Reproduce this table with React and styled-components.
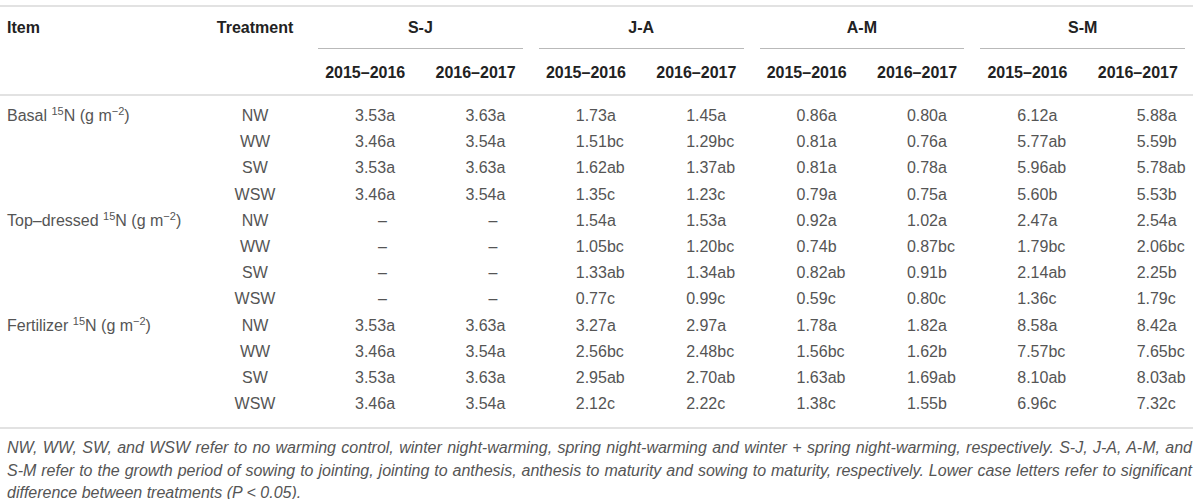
import React from "react";
import styled, { createGlobalStyle } from "styled-components";

const Global = createGlobalStyle`
  html, body { margin: 0; padding: 0; background: #fff; }
  body { font-family: "Liberation Sans", Arial, Helvetica, sans-serif; }
`;

const Page = styled.div`
  width: 1200px;
  padding-top: 5px;
`;

const Table = styled.table`
  width: 1193px;
  table-layout: fixed;
  border-collapse: separate;
  border-spacing: 0;
  font-size: 16px;
`;

const Head = styled.thead``;

const HeadCell = styled.th`
  height: 42px;
  padding: ${(p) => (p.$row === 2 ? "3px 0 0 0" : "0")};
  font-weight: bold;
  color: #222;
  text-align: ${(p) => (p.$left ? "left" : "center")};
  padding-left: ${(p) => (p.$left ? "7px" : "0")};
  vertical-align: middle;
  border-top: ${(p) => (p.$row === 1 ? "2px solid #e2e2e2" : "none")};
  border-bottom: ${(p) => (p.$row === 2 ? "2px solid #e2e2e2" : "none")};
  white-space: nowrap;
`;

const GroupCell = styled.th`
  height: 42px;
  padding: 0 8px;
  border-top: 2px solid #e2e2e2;
  vertical-align: bottom;
`;

const GroupLabel = styled.div`
  height: 41px;
  display: flex;
  align-items: center;
  justify-content: center;
  border-bottom: 1px solid #b9b9b9;
  font-weight: bold;
  color: #222;
`;

const Row = styled.tr`
  &:first-child td { padding-top: 7px; }
  &:last-child td { padding-bottom: 10px; border-bottom: 2px solid #e2e2e2; }
`;

const Cell = styled.td`
  height: 26.2px;
  line-height: 26.2px;
  padding: 0;
  color: #555;
  white-space: nowrap;
  vertical-align: middle;
`;

const ItemCell = styled(Cell)`
  padding-left: 7px;
  text-align: left;
`;

const TreatCell = styled(Cell)`
  text-align: center;
`;

const ValueCell = styled(Cell)`
  text-align: left;
  padding-left: ${(p) => p.$pad}px;
`;

const Sup = styled.sup`
  font-size: 11px;
  line-height: 0;
  vertical-align: 6px;
`;

const Note = styled.p`
  margin: 8px 0 0 0;
  padding: 0 8px 0 7px;
  font-style: italic;
  font-size: 16px;
  line-height: 22.5px;
  color: #555;
  text-align: justify;
  text-align-last: left;
`;

const groups = ["S-J", "J-A", "A-M", "S-M"];
const years = ["2015\u20132016", "2016\u20132017"];

const Label = ({ name }) => (
  <>
    {name} <Sup>15</Sup>N (g m<Sup>{"\u2212"}2</Sup>)
  </>
);

const D = "\u2013";

const rows = [
  { item: "Basal", t: "NW", v: ["3.53a", "3.63a", "1.73a", "1.45a", "0.86a", "0.80a", "6.12a", "5.88a"] },
  { t: "WW", v: ["3.46a", "3.54a", "1.51bc", "1.29bc", "0.81a", "0.76a", "5.77ab", "5.59b"] },
  { t: "SW", v: ["3.53a", "3.63a", "1.62ab", "1.37ab", "0.81a", "0.78a", "5.96ab", "5.78ab"] },
  { t: "WSW", v: ["3.46a", "3.54a", "1.35c", "1.23c", "0.79a", "0.75a", "5.60b", "5.53b"] },
  { item: "Top\u2013dressed", t: "NW", v: [D, D, "1.54a", "1.53a", "0.92a", "1.02a", "2.47a", "2.54a"] },
  { t: "WW", v: [D, D, "1.05bc", "1.20bc", "0.74b", "0.87bc", "1.79bc", "2.06bc"] },
  { t: "SW", v: [D, D, "1.33ab", "1.34ab", "0.82ab", "0.91b", "2.14ab", "2.25b"] },
  { t: "WSW", v: [D, D, "0.77c", "0.99c", "0.59c", "0.80c", "1.36c", "1.79c"] },
  { item: "Fertilizer", t: "NW", v: ["3.53a", "3.63a", "3.27a", "2.97a", "1.78a", "1.82a", "8.58a", "8.42a"] },
  { t: "WW", v: ["3.46a", "3.54a", "2.56bc", "2.48bc", "1.56bc", "1.62b", "7.57bc", "7.65bc"] },
  { t: "SW", v: ["3.53a", "3.63a", "2.95ab", "2.70ab", "1.63ab", "1.69ab", "8.10ab", "8.03ab"] },
  { t: "WSW", v: ["3.46a", "3.54a", "2.12c", "2.22c", "1.38c", "1.55b", "6.96c", "7.32c"] },
];

const padFor = (i, val) => {
  const base = i === 7 ? 54 : 45;
  return val === D ? base + 23 : base;
};

const WJ = "\u2060";
const note =
  "NW, WW, SW, and WSW refer to no warming control, winter night-warming, spring night-warming " +
  `and winter + spring night-warming, respectively. S-${WJ}J, J-${WJ}A, A-${WJ}M, and S-${WJ}M refer to the ` +
  "growth period of sowing to jointing, jointing to anthesis, anthesis to maturity and sowing " +
  "to maturity, respectively. Lower case letters refer to significant difference between " +
  "treatments (P < 0.05).";

export default function App() {
  return (
    <Page>
      <Global />
      <Table>
        <colgroup>
          <col style={{ width: 200 }} />
          <col style={{ width: 110 }} />
          {Array.from({ length: 8 }).map((_, i) => (
            <col key={i} style={{ width: 110.375 }} />
          ))}
        </colgroup>
        <Head>
          <tr>
            <HeadCell $row={1} $left>Item</HeadCell>
            <HeadCell $row={1}>Treatment</HeadCell>
            {groups.map((g) => (
              <GroupCell key={g} colSpan={2}>
                <GroupLabel>{g}</GroupLabel>
              </GroupCell>
            ))}
          </tr>
          <tr>
            <HeadCell $row={2} />
            <HeadCell $row={2} />
            {groups.map((g) =>
              years.map((y) => (
                <HeadCell $row={2} key={g + y}>
                  {y}
                </HeadCell>
              ))
            )}
          </tr>
        </Head>
        <tbody>
          {rows.map((r, ri) => (
            <Row key={ri}>
              <ItemCell>{r.item ? <Label name={r.item} /> : null}</ItemCell>
              <TreatCell>{r.t}</TreatCell>
              {r.v.map((val, i) => (
                <ValueCell key={i} $pad={padFor(i, val)}>
                  {val}
                </ValueCell>
              ))}
            </Row>
          ))}
        </tbody>
      </Table>
      <Note>{note}</Note>
    </Page>
  );
}
